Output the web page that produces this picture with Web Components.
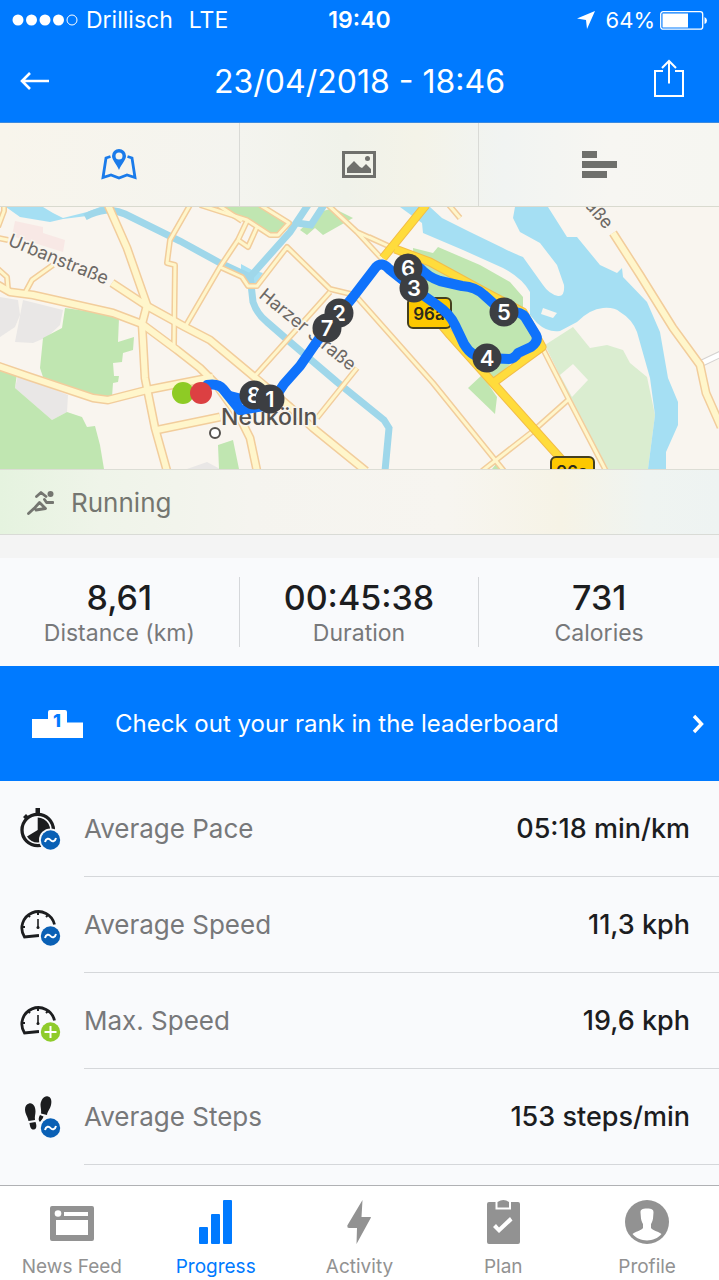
<!DOCTYPE html>
<html lang="en">
<head>
<meta charset="utf-8">
<meta name="viewport" content="width=device-width, initial-scale=1">
<title>Running session</title>
<style>
html, body {
  margin: 0;
  height: 100%;
}
body {
  font-family: Inter, "Liberation Sans", sans-serif;
  --blue: #007aff;
  --ink: #1c1d1f;
  --muted: #77787a;
  --line: #d5d7da;
  --paper: #f9fafc;
}
</style>
</head>
<body>
<session-page>
  <status-bar slot="header" carrier="Drillisch" network="LTE" time="19:40" battery="64"></status-bar>
  <nav-bar slot="header">23/04/2018 - 18:46</nav-bar>

  <view-tabs></view-tabs>
  <route-map></route-map>
  <sport-label icon="runner">Running</sport-label>

  <stat-group>
    <stat-cell label="Distance (km)">8,61</stat-cell>
    <stat-cell label="Duration">00:45:38</stat-cell>
    <stat-cell label="Calories">731</stat-cell>
  </stat-group>

  <rank-banner>Check out your rank in the leaderboard</rank-banner>

  <metric-row icon="pace" label="Average Pace">05:18 min/km</metric-row>
  <metric-row icon="speed" label="Average Speed">11,3 kph</metric-row>
  <metric-row icon="maxspeed" label="Max. Speed">19,6 kph</metric-row>
  <metric-row icon="steps" label="Average Steps">153 steps/min</metric-row>

  <tab-bar slot="footer">
    <tab-link icon="feed">News Feed</tab-link>
    <tab-link icon="progress" active>Progress</tab-link>
    <tab-link icon="bolt">Activity</tab-link>
    <tab-link icon="plan">Plan</tab-link>
    <tab-link icon="profile">Profile</tab-link>
  </tab-bar>
</session-page>

<script>
// badges shared by the metric icons
const averageBadge = `
  <circle cx="30.5" cy="32" r="11.5" fill="#f9fafc"/>
  <circle cx="30.5" cy="32" r="9.7" fill="#0a60b5"/>
  <path d="M25 34c1-4 4-4 5.500-2s4.500 2 5.500-2" fill="none" stroke="#fff" stroke-width="2"/>`;
const plusBadge = `
  <circle cx="30.5" cy="32" r="11.5" fill="#f9fafc"/>
  <circle cx="30.5" cy="32" r="9.7" fill="#8fcb2b"/>
  <path d="M24.500 32h12M30.500 26v12" fill="none" stroke="#fff" stroke-width="2"/>`;
const gauge = `
  <path d="M19 31.500 4.500 33A16.500 16.500 0 1 1 34.500 20.500" fill="none" stroke="currentColor" stroke-width="2.800"/>
  <path d="M18 7v4M8 11l2 2M28 11l-2 2M2 23h3" fill="none" stroke="currentColor" stroke-width="2"/>
  <path d="M18 15v8" stroke="currentColor" stroke-width="1.600"/>
  <circle cx="18" cy="23.500" r="1.500"/>`;

// name: [width, height, content]
const icons = {
  signal: [66, 12, `
    <circle cx="6" cy="6" r="5.500"/><circle cx="19.500" cy="6" r="5.500"/>
    <circle cx="33" cy="6" r="5.500"/><circle cx="46.500" cy="6" r="5.500"/>
    <circle cx="60" cy="6" r="5" fill="none" stroke="currentColor"/>`],
  location: [18, 18, '<path d="M18 0 10 18 9 9 0 7.500z"/>'],
  battery: [47, 19, `
    <rect x=".7" y=".7" width="42" height="17.500" rx="2.500" fill="none" stroke="currentColor" stroke-width="1.300"/>
    <path d="M2.500 2.500H28v14H2.500zM44.500 6q2.500 1 2.500 3.500t-2.500 3.500z"/>`],
  back: [30, 20, '<path d="M10 2 2 10l8 8M2 10h27" fill="none" stroke="currentColor" stroke-width="2.600"/>'],
  share: [30, 38, `
    <path d="M9 12H1v25h28V12h-8M15 2v22.500M8 9l7-7 7 7" fill="none" stroke="currentColor" stroke-width="2"/>`],
  map: [36, 31, `
    <path d="M9.500 7.500 5 9 2 28.500 10 26l8 3 8-3 8 2.500L31 9l-4.500-1.500" fill="none" stroke="currentColor" stroke-width="2.800"/>
    <path fill-rule="evenodd" d="M18 0a7 7 0 0 0-7 7c0 4 4.500 8 7 14 2.500-6 7-10 7-14a7 7 0 0 0-7-7zm0 3.500a3.500 3.500 0 1 1 0 7 3.500 3.500 0 0 1 0-7z"/>`],
  picture: [34, 27, `
    <path fill-rule="evenodd" d="M0 0h34v27H0zM3 3v21h28V3z"/>
    <path d="M5 22v-5l7-7 6 6 2 1 4-4 5 5v4z"/><circle cx="25.500" cy="7.500" r="2.500"/>`],
  bars: [35, 27, '<path d="M0 0h15v7H0zM0 10h35v7H0zM0 20h25v7H0z"/>'],
  runner: [27, 25, `
    <circle cx="23.500" cy="4" r="3"/>
    <path d="M9.500 6.500 14 2.500l5 4M17.500 9.500l2 3H26M1.500 23.500 8 17.500l4.500-5 6 6-9.500 1.500" fill="none"
      stroke="currentColor" stroke-width="2.800" stroke-linecap="round" stroke-linejoin="round"/>`],
  chevron: [12, 20, '<path d="m2 2 7.500 8L2 18" fill="none" stroke="currentColor" stroke-width="3.400"/>'],
  pace: [41, 42, `
    <circle cx="17.700" cy="22" r="15.700" fill="none" stroke="currentColor" stroke-width="3.300"/>
    <path d="M15.500 0H20v6h-4.500zM3 9l3-3 3 3-3 3zM17.700 22V9.500A12.500 12.500 0 1 1 7 28.500z"/>
    ${averageBadge}`],
  speed: [41, 42, gauge + averageBadge],
  maxspeed: [41, 42, gauge + plusBadge],
  steps: [41, 42, `
    <path d="M9 7.500c4-1 6.500 3 6.500 8 0 3-1 5-.5 8.500l-6.500 1C8 21 5 18 5 13.500 5 10 6.500 8 9 7.500zM9.500 27l6-1c1.500 4 1 7-1.500 7.500-3 .5-4-2.500-4.500-6.500z"/>
    <path d="M28 .5c3 .5 4 4 3 8.500s-3.500 6-4 10l-6-1.500c.5-3.500-.5-6-.5-9C21 4 24-.5 28 .5zM20 19l3.500 1.500c-1 3-2.500 4-3.500 5.500-2-2-1.500-4.500 0-7z"/>
    ${averageBadge}`],
  feed: [44, 44, `
    <path fill-rule="evenodd" d="M2 6h40q2 0 2 2v31q0 2-2 2H2q-2 0-2-2V8q0-2 2-2zM14 12v4h24v-4zM6 20v15h32V20z"/>
    <circle cx="8" cy="13.500" r="3.300" fill="#fff"/>`],
  progress: [33, 44, `
    <rect y="27" width="9" height="17" rx="1"/><rect x="12" y="14" width="9" height="30" rx="1"/>
    <rect x="24" width="9" height="44" rx="1"/>`],
  bolt: [24, 44, '<path d="M15.500 0 .3 25.500Q0 28 2 28h8L9.500 44 24 17.500 23.500 17H14.500z"/>'],
  plan: [33, 44, `
    <path fill-rule="evenodd" d="M2 2h6.500v7.500h15.500V2H31q2 0 2 2v38q0 2-2 2H2q-2 0-2-2V4q0-2 2-2zM6 27l6 6L25.500 20.500 23 17 12 27.500 9 24z"/>
    <path d="M10.500 2q6-4 11.500 0v5.500H10.500z"/>`],
  profile: [44, 44, `
    <circle cx="22" cy="22" r="22"/>
    <path d="M22 8.500c5 0 6.500 1 6.500 4l-.5 6c-.5 3-1.500 4.500-2 5.500v4c2 3 8 3.500 10.500 6-7 8.500-22 8.500-29 0 2.500-2.500 8.500-3 10.500-6v-4c-.5-1-1.500-2.500-2-5.500l-.5-6c0-3 1.500-4 6.500-4z" fill="#fff"/>`]
};

// Attaches an open shadow root filled with the element's own markup.
class BaseElement extends HTMLElement {
  constructor() {
    super();
    this.attachShadow({mode: 'open'});
  }
  connectedCallback() {
    this.shadowRoot.innerHTML = this.render();
  }
}

customElements.define('app-icon', class extends BaseElement {
  render() {
    const [w, h, content] = icons[this.getAttribute('name')];
    return `
    <style>
    :host { display: inline-flex; flex: none; }
    svg { display: block; }
    </style>
    <svg width="${w}" height="${h}" viewBox="0 0 ${w} ${h}" fill="currentColor" aria-hidden="true">${content}</svg>`;
  }
});

customElements.define('session-page', class extends BaseElement {
  render() {
    return `
    <style>
    :host {
      display: flex;
      flex-direction: column;
      height: 100%;
      background: var(--paper);
      color: var(--ink);
    }
    header { background: var(--blue); color: #fff; border-bottom: 1px solid #3b8ae0; }
    main { flex: 1; min-height: 0; overflow: hidden; }
    </style>
    <header><slot name="header"></slot></header>
    <main><slot></slot></main>
    <slot name="footer"></slot>`;
  }
});

customElements.define('status-bar', class extends BaseElement {
  render() {
    return `
    <style>
    :host {
      display: grid;
      grid-template-columns: 1fr auto 1fr;
      align-items: center;
      height: 40px;
      padding: 0 12px;
      font-size: 23px;
    }
    div { display: flex; align-items: center; gap: 8px; }
    .network { margin-left: 8px; }
    .end { justify-content: flex-end; gap: 5px; font-size: 22px; }
    .end app-icon:first-child { margin-right: 6px; }
    b { font-weight: 600; }
    </style>
    <div>
      <app-icon name="signal"></app-icon>
      <span>${this.getAttribute('carrier')}</span>
      <span class="network">${this.getAttribute('network')}</span>
    </div>
    <b>${this.getAttribute('time')}</b>
    <div class="end">
      <app-icon name="location"></app-icon>
      <span>${this.getAttribute('battery')}%</span>
      <app-icon name="battery"></app-icon>
    </div>`;
  }
});

customElements.define('nav-bar', class extends BaseElement {
  render() {
    return `
    <style>
    :host {
      display: flex;
      align-items: center;
      justify-content: space-between;
      height: 82px;
      padding: 0 20px;
    }
    h1 { margin: 0; font-size: 32px; font-weight: 400; }
    button {
      display: flex;
      width: 46px;
      padding: 0;
      border: 0;
      background: none;
      color: inherit;
    }
    button:last-child { justify-content: flex-end; padding: 0 15px 6px 0; }
    </style>
    <button aria-label="Back"><app-icon name="back"></app-icon></button>
    <h1><slot></slot></h1>
    <button aria-label="Share"><app-icon name="share"></app-icon></button>`;
  }
});

customElements.define('view-tabs', class extends BaseElement {
  render() {
    return `
    <style>
    :host {
      display: grid;
      grid-template-columns: repeat(3, 1fr);
      height: 83px;
      border-bottom: 1px solid #d9dacf;
      background: linear-gradient(90deg, #f8f5ec, #f4f4ef 33%, #f0f2ea 48%, #f4f3e8 58%, #f1f4f2 70%, #f7f6f2 85%, #f6f6f1);
    }
    button {
      display: flex;
      align-items: center;
      justify-content: center;
      padding: 0;
      border: 0;
      background: none;
      color: #6f706c;
    }
    button:not(:last-child) { border-right: 1px solid #d9dad6; }
    [aria-pressed=true] { color: #1a7bea; }
    </style>
    <button aria-label="Map" aria-pressed="true"><app-icon name="map"></app-icon></button>
    <button aria-label="Photos"><app-icon name="picture"></app-icon></button>
    <button aria-label="Splits"><app-icon name="bars"></app-icon></button>`;
  }
});

// kilometre marks along the route, in drawing order
const marks = [
  [6, 408, 61], [3, 414, 81], [2, 339, 106], [7, 327, 121],
  [8, 254, 188], [1, 270, 192], [5, 504, 105], [4, 487, 151]
];

customElements.define('route-map', class extends BaseElement {
  render() {
    return `
    <style>
    :host { display: block; background: #f9f5ef; }
    svg { display: block; width: 100%; }
    .park { fill: #c0e6b1; }
    .wood { fill: #daedd0; }
    .block { fill: #e9e7e6; }
    .water { fill: #a5dff3; }
    .canal { fill: none; stroke: #9fd7ea; stroke-width: 7; }
    .road { fill: none; stroke-linejoin: round; }
    .case { stroke: #f2cd9c; }
    .fill { stroke: #fff6cb; }
    .wide.case { stroke-width: 9; }
    .wide.fill { stroke-width: 6; }
    .thin.case { stroke-width: 6; }
    .thin.fill { stroke-width: 3; }
    .main.case { stroke: #f3bd48; stroke-width: 9; }
    .main.fill { stroke: #ffdc3c; stroke-width: 7; }
    .route { fill: none; stroke: #0f72fb; stroke-width: 10; stroke-linejoin: round; stroke-linecap: round; }
    .mark { fill: #3c3e42; }
    .number { fill: #fff; font-size: 22px; font-weight: 600; text-anchor: middle; }
    .street { fill: #6c6864; font-size: 18px; stroke: #f9f5ef; stroke-width: 3; paint-order: stroke; }
    .town { fill: #55524f; font-size: 23px; font-weight: 500; stroke: #f9f5ef; stroke-width: 3; paint-order: stroke; }
    .shield rect { fill: #fdc800; stroke: #45401f; stroke-width: 2; }
    .shield text { fill: #2c2a1d; font-size: 17px; font-weight: 600; text-anchor: middle; }
    </style>
    <svg viewBox="0 0 719 262" role="img" aria-label="Route map">
      <defs>
        <g id="wide">
          <path d="M108-2 127 41 147 98 142 117 145 171 155 221 167 264"/>
          <path d="M-2 78 10 85 33 88 113 106 142 117 177 143 200 161 215 176 240 211 250 231 257 264"/>
          <path d="M112 76 147 99 185 120 210 133 240 158 290 200 313 221 366 264"/>
          <path d="M613 26 640 68 673 121 700 158 706 186 721 220"/>
          <path d="M-2 159 30 170 93 191 108 193 147 183 213 170"/>
          <path d="M157 223 220 210"/>
        </g>
        <g id="thin">
          <path d="M190-2 170 33 167 56 175 58 174 138"/>
          <path d="M185 120 220 60 238 33 247 14M200-2 247 13 270 28 278 28 289 16 260-2M238 33 248 40 257 20"/>
          <path d="M220 60 242 70 248 79 257 79 287 40 330 82 355 88 433 176 504 264"/>
          <path d="M330 85 253 171M357 161 317 211M328-2 357 25 382 52M357 25 395 42M369 30 395 42"/>
          <path d="M449-2 460 11M542 140 568 191 606 264M568 193 532 225 482 264"/>
          <path d="M53 58 32 73 25 86M-2 62 7 70 8 82M-2 31 8 33M-2 20 4 4 4-2M218-2 242 14"/>
        </g>
        <g id="main">
          <path d="M426-2 383 51M395 42 430 55 487 86 523 105 542 140 493 176M408 78 450 128 493 176 570 262"/>
        </g>
      </defs>

      <path class="block" d="M0 90 18 93 20 108 15 120 0 130zM23 93 63 103 60 118 47 130 33 136 15 135zM18 168 68 188 67 205 52 213 15 181zM187 262 207 255 220 262z"/>
      <path d="M15 14 43 20 43 26 65 33 63 45 12 29z" fill="#f8e8e5"/>
      <path class="park" d="M65 101 100 106 119 111 118 135 134 130 133 143 123 146 122 155 113 156 114 169 119 169 118 175 113 176 112 190 93 188 43 170 40 161 43 131 62 121z"/>
      <path class="park" d="M0 161 17 166 15 181 52 213 67 205 82 210 87 220 95 219 100 238 104 262H0z"/>
      <path class="park" d="M218 238 233 233 239 262H219zM223 0H262L288 15 278 28 260 22zM300 23 320 5 333 1 353 11 323 28 315 21 307 28zM230 0 240 0 240 5zM496 257 504 262H492z"/>
      <path class="park" d="M413 41 433 46 438 40 480 58 510 75 523 90 523 105 537 131 493 174 450 122 415 80zM468 181 482 168 497 190 495 207z"/>
      <path class="wood" d="M545 138 573 120 590 141 607 138 623 143 630 156 647 170 655 208 648 262H608L570 190z"/>
      <path d="M560 168 573 157 588 173 572 190z" fill="#f9f5ef"/>

      <path class="water" d="M6 0 20 10 50 15 63 12 87 9 112 4 112 0H100L87 5 63 11 53 6 43 0zM241 57 252 63 263 66 254 80 248 82 241 68z"/>
      <path class="canal" d="M85 10C100 2 112 1 125 7L180 34 220 56 250 70 290 25 308-2M297 16 311 18 324-2M250 68 253 95Q257 107 267 115L290 135 337 175 384 213 389 221 385 264"/>
      <path class="water" d="M400 0 422 16 423 26 463 43 503 61Q522 71 530 85L530 108 537 116Q548 126 560 124L577 115Q590 102 603 101 614 100 620 105 632 112 637 125L650 171 655 208 648 262H666V245L678 218 678 195 668 171 660 125 647 95 623 70 622 61 617 66 600 58 577 30H567L548 0H515L513 11 520 25 540 36 557 58 564 78Q565 90 558 89 549 87 543 78L523 50Q510 45 503 41L470 25 442 11 430 0z"/>
      <path d="M543 101 557 106 553 111 541 107z" fill="#f9f5ef"/>

      <path d="M700 157 721 147" fill="none" stroke="#d5d2d0" stroke-width="7"/>
      <path d="M700 157 721 147" fill="none" stroke="#fff" stroke-width="5"/>
      <use href="#thin" class="road thin case"/>
      <use href="#wide" class="road wide case"/>
      <use href="#thin" class="road thin fill"/>
      <use href="#wide" class="road wide fill"/>
      <use href="#main" class="road main case"/>
      <use href="#main" class="road main fill"/>

      <text class="street" transform="translate(7 38) rotate(22)">Urbanstraße</text>
      <text class="street" transform="translate(258 90) rotate(39)">Harzer Straße</text>
      <text class="street" transform="translate(580 -6) rotate(49)">raße</text>
      <text class="town" x="221" y="218">Neukölln</text>
      <circle cx="215" cy="226" r="5" fill="#fff" stroke="#55524f" stroke-width="2"/>

      <g class="shield">
        <rect x="408" y="91" width="43" height="30" rx="5"/>
        <text x="429" y="113">96a</text>
        <rect x="551" y="250" width="43" height="30" rx="5"/>
        <text x="572" y="271">96a</text>
      </g>

      <path class="route" d="M207 178Q218 176 223 182L240 203 252 201 270 198 284 177 300 159 318 133 353 90 376 60Q382 54 389 62L413 81 437 98Q450 107 455 118L464 137Q472 151 487 151L509 152Q514 152 518 146L531 140Q539 134 536 128L525 110Q520 103 503 105L484 88Q476 80 462 79L440 74Q428 70 420 61L408 58"/>
      <path class="route" d="M230 189 246 193"/>
      <circle cx="183" cy="186" r="11" fill="#8ecb25"/>
      <circle cx="201" cy="186" r="11" fill="#dc4042"/>
      ${marks.map(([n, x, y]) => `
      <circle class="mark" cx="${x}" cy="${y}" r="14.500"/>
      <text class="number" x="${x}" y="${y + 8}">${n}</text>`).join('')}
    </svg>`;
  }
});

customElements.define('sport-label', class extends BaseElement {
  render() {
    return `
    <style>
    :host {
      display: flex;
      align-items: center;
      gap: 17px;
      height: 64px;
      padding: 0 27px;
      border-top: 1px solid #dcddd5;
      border-bottom: 1px solid #d9dbd6;
      background: linear-gradient(90deg, #e5f3df, #eff4e9 14%, #f5f4ef 35%, #f7f5f0 62%, #f6f3e6 78%, #eff4f1 90%, #eef3f2);
      color: #747670;
      font-size: 26px;
    }
    </style>
    <app-icon name="${this.getAttribute('icon')}"></app-icon>
    <slot></slot>`;
  }
});

customElements.define('stat-group', class extends BaseElement {
  render() {
    return `
    <style>
    :host {
      display: grid;
      grid-template-columns: repeat(3, 1fr);
      padding: 19px 0;
      border-top: 23px solid #f4f4f4;
    }
    ::slotted(:not(:last-child)) { border-right: 1px solid var(--line); }
    </style>
    <slot></slot>`;
  }
});

customElements.define('stat-cell', class extends BaseElement {
  render() {
    return `
    <style>
    :host {
      display: flex;
      flex-direction: column;
      align-items: center;
      height: 70px;
    }
    strong { font-size: 34px; line-height: 42px; font-weight: 500; }
    span { color: var(--muted); font-size: 23px; line-height: 28px; }
    </style>
    <strong><slot></slot></strong>
    <span>${this.getAttribute('label')}</span>`;
  }
});

customElements.define('rank-banner', class extends BaseElement {
  render() {
    return `
    <style>
    :host { display: block; }
    a {
      display: flex;
      align-items: center;
      gap: 32px;
      height: 115px;
      padding: 0 15px 0 32px;
      background: var(--blue);
      color: #fff;
      font-size: 24px;
      text-decoration: none;
    }
    svg { flex: none; }
    span { flex: 1; }
    </style>
    <a href="#leaderboard">
      <svg width="51" height="28" viewBox="0 0 51 28">
        <path d="M0 9h16V2q0-2 2-2h15q2 0 2 2v10.500h16V28H0z" fill="#fff"/>
        <text x="25" y="17" font-size="18" font-weight="800" text-anchor="middle" fill="#007aff">1</text>
      </svg>
      <span><slot></slot></span>
      <app-icon name="chevron"></app-icon>
    </a>`;
  }
});

customElements.define('metric-row', class extends BaseElement {
  render() {
    return `
    <style>
    :host {
      display: flex;
      align-items: center;
      gap: 23px;
      height: 96px;
      padding-left: 20px;
      font-size: 26px;
    }
    div {
      display: flex;
      flex: 1;
      align-items: center;
      justify-content: space-between;
      height: 95px;
      padding-right: 29px;
      border-bottom: 1px solid var(--line);
    }
    label { color: var(--muted); }
    output { font-size: 27px; font-weight: 500; }
    </style>
    <app-icon name="${this.getAttribute('icon')}"></app-icon>
    <div>
      <label for="value">${this.getAttribute('label')}</label>
      <output id="value"><slot></slot></output>
    </div>`;
  }
});

customElements.define('tab-bar', class extends BaseElement {
  render() {
    return `
    <style>
    :host { display: block; border-top: 1px solid #b0b1b4; background: #fff; }
    nav { display: grid; grid-template-columns: repeat(5, 1fr); height: 94px; }
    </style>
    <nav><slot></slot></nav>`;
  }
});

customElements.define('tab-link', class extends BaseElement {
  render() {
    return `
    <style>
    :host { display: block; color: #929292; }
    :host([active]) { color: var(--blue); }
    a {
      display: flex;
      flex-direction: column;
      align-items: center;
      gap: 11px;
      padding-top: 14px;
      color: inherit;
      font-size: 19px;
      line-height: 24px;
      text-decoration: none;
    }
    </style>
    <a href="#${this.getAttribute('icon')}">
      <app-icon name="${this.getAttribute('icon')}"></app-icon>
      <slot></slot>
    </a>`;
  }
});
</script>
</body>
</html>
